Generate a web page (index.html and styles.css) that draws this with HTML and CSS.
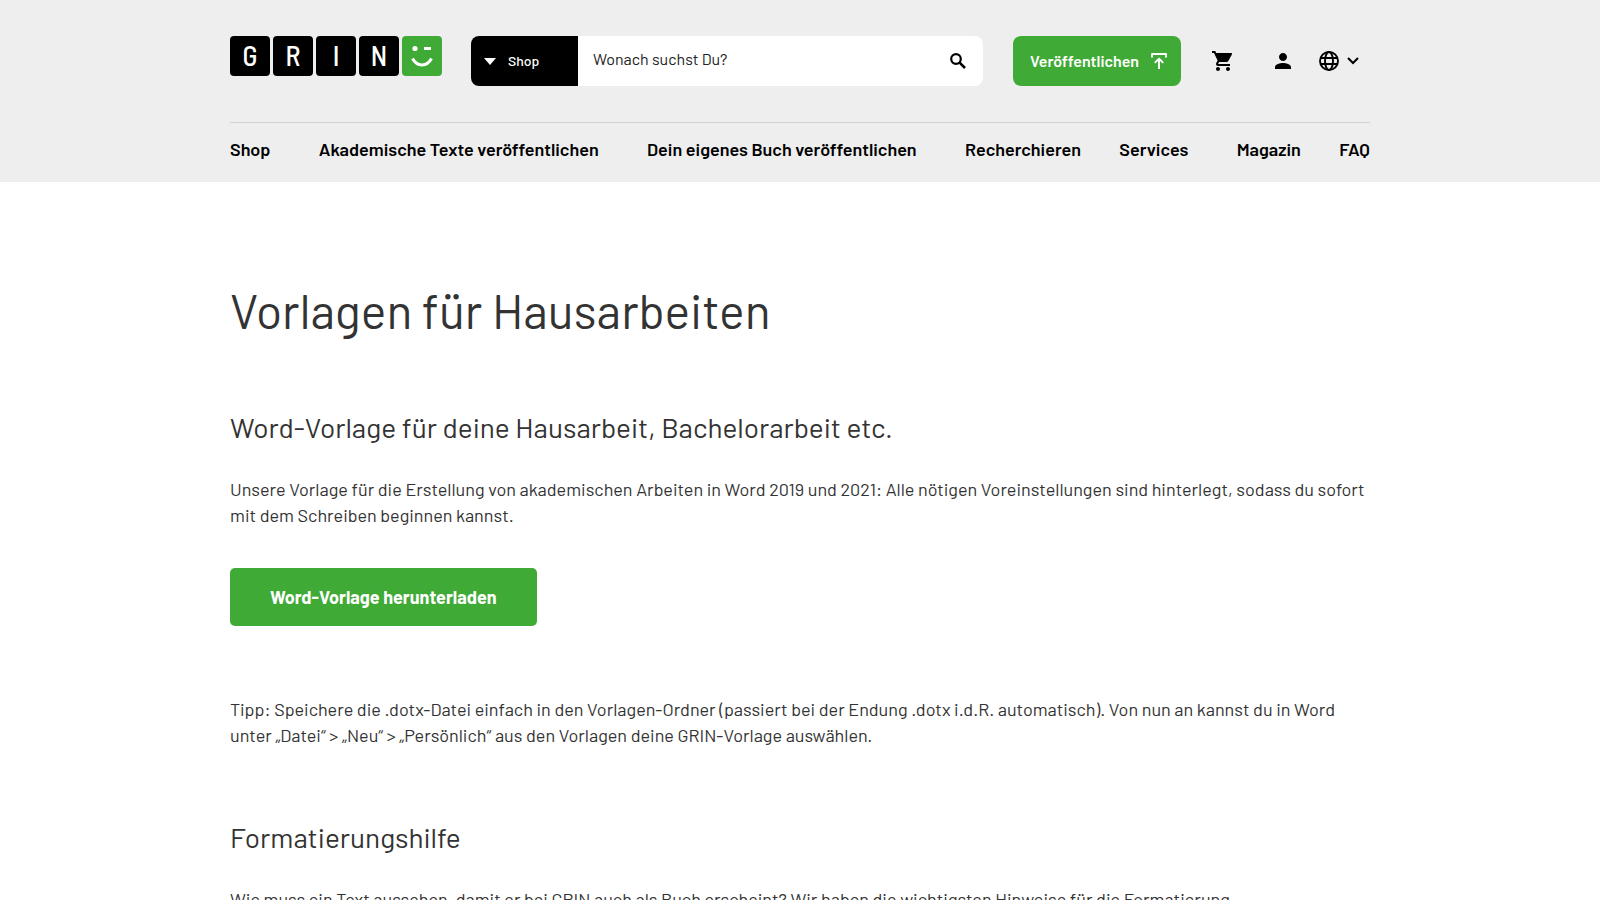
FILE: index.html
```html
<!DOCTYPE html>
<html lang="de">
<head>
    <meta charset="UTF-8">
    <meta name="viewport" content="width=device-width, initial-scale=1.0">
    <title>Vorlagen für Hausarbeiten</title>
    <link rel="stylesheet" href="styles.css">
</head>
<body>

    <header class="header">
        <div class="container">
            <div class="topbar">
                <a href="#" class="logo" aria-label="GRIN">
                    <span class="tile">G</span>
                    <span class="tile">R</span>
                    <span class="tile">I</span>
                    <span class="tile">N</span>
                    <span class="tile smiley">
                        <svg width="40" height="40" viewBox="0 0 40 40" fill="none" stroke="#fff">
                            <circle cx="13" cy="12.5" r="2.6" fill="#fff" stroke="none"/>
                            <path d="M22 12.500h7" stroke-width="3"/>
                            <path d="M10.500 22.500C15 31 25 31 29.500 22.500" stroke-width="3"/>
                        </svg>
                    </span>
                </a>

                <form class="search">
                    <div class="category">
                        <svg class="caret" width="12" height="7" viewBox="0 0 12 7"><path d="M0 0h12L6 7z" fill="#fff"/></svg>
                        <select aria-label="Bereich">
                            <option>Shop</option>
                        </select>
                    </div>
                    <input type="text" placeholder="Wonach suchst Du?" aria-label="Suche">
                    <button type="submit" class="search-button" aria-label="Suchen">
                        <svg width="16" height="16" viewBox="0 0 16 16" fill="none" stroke="#000" stroke-width="2.2">
                            <circle cx="6" cy="6" r="4.800"/>
                            <path d="M9.600 9.600L15 15" stroke-width="2.6"/>
                        </svg>
                    </button>
                </form>

                <a href="#" class="publish">
                    Veröffentlichen
                    <svg width="16" height="16" viewBox="0 0 16 16" fill="none" stroke="#fff" stroke-width="1.9" stroke-linejoin="round">
                        <path d="M1 4.500V1h14v3.500M8 16V6M3.800 9.800L8 5.600l4.200 4.200"/>
                    </svg>
                </a>

                <div class="icons">
                    <a href="#" aria-label="Warenkorb">
                        <svg width="24" height="24" viewBox="0 0 24 24"><path d="M7 18c-1.100 0-1.990.9-1.990 2S5.900 22 7 22s2-.9 2-2-.9-2-2-2zM1 2v2h2l3.600 7.590-1.350 2.450c-.16.28-.25.61-.25.96 0 1.100.9 2 2 2h12v-2H7.420c-.14 0-.25-.11-.25-.25l.03-.12.9-1.630h7.450c.75 0 1.410-.41 1.750-1.030l3.580-6.490A1 1 0 0 0 20 4H5.210l-.94-2H1zm16 16c-1.100 0-1.990.9-1.990 2s.89 2 1.990 2 2-.9 2-2-.9-2-2-2z"/></svg>
                    </a>
                    <a href="#" aria-label="Mein Konto">
                        <svg width="24" height="24" viewBox="0 0 24 24"><path d="M12 12c2.210 0 4-1.790 4-4s-1.790-4-4-4-4 1.790-4 4 1.790 4 4 4zm0 2c-2.670 0-8 1.340-8 4v2h16v-2c0-2.660-5.330-4-8-4z"/></svg>
                    </a>
                    <button type="button" class="language" aria-label="Sprache">
                        <svg width="20" height="20" viewBox="0 0 20 20" fill="none" stroke="#000" stroke-width="1.900">
                            <circle cx="10" cy="10" r="9"/>
                            <ellipse cx="10" cy="10" rx="4" ry="9"/>
                            <path d="M1.500 7h17M1.500 13h17"/>
                        </svg>
                        <svg width="12" height="8" viewBox="0 0 12 8" fill="none" stroke="#000" stroke-width="2">
                            <path d="M1 1l5 5 5-5"/>
                        </svg>
                    </button>
                </div>
            </div>

            <nav class="nav">
                <a href="#" class="has-submenu">Shop</a>
                <a href="#" class="has-submenu">Akademische Texte veröffentlichen</a>
                <a href="#" class="has-submenu">Dein eigenes Buch veröffentlichen</a>
                <a href="#">Recherchieren</a>
                <a href="#" class="has-submenu">Services</a>
                <a href="#">Magazin</a>
                <a href="#">FAQ</a>
            </nav>
        </div>
    </header>

    <main class="container content">
        <h1>Vorlagen für Hausarbeiten</h1>

        <h2>Word-Vorlage für deine Hausarbeit, Bachelorarbeit etc.</h2>
        <p>Unsere Vorlage für die Erstellung von akademischen Arbeiten in Word 2019 und 2021: Alle nötigen Voreinstellungen sind hinterlegt, sodass du sofort mit dem Schreiben beginnen kannst.</p>

        <a href="#" class="download">Word-Vorlage herunterladen</a>

        <p>Tipp: Speichere die .dotx-Datei einfach in den Vorlagen-Ordner (passiert bei der Endung .dotx i.d.R. automatisch). Von nun an kannst du in Word unter „Datei“ &gt; „Neu“ &gt; „Persönlich“ aus den Vorlagen deine GRIN-Vorlage auswählen.</p>

        <h2 class="next">Formatierungshilfe</h2>
        <p>Wie muss ein Text aussehen, damit er bei GRIN auch als Buch erscheint? Wir haben die wichtigsten Hinweise für die Formatierung</p>
    </main>

</body>
</html>
```
FILE: styles.css
```css
* {
    box-sizing: border-box;
}

body {
    margin: 0;
    font-family: Barlow, Roboto, sans-serif;
    font-size: 18px;
    line-height: 26px;
    color: #333;
    background-color: #fff;
}

a {
    color: #000;
    text-decoration: none;
}

svg {
    display: block;
    flex-shrink: 0;
}

.container {
    max-width: 1140px;
    margin: 0 auto;
}

.header {
    background-color: #eee;
}

.topbar {
    display: flex;
    align-items: center;
    padding: 36px 0;
    border-bottom: 1px solid #d2d2d2;
}

.logo {
    display: flex;
    align-self: flex-start;
    gap: 3px;
    margin-right: 29px;
}

.tile {
    width: 40px;
    height: 40px;
    border-radius: 4px;
    background-color: #000;
    color: #fff;
    font-family: "Barlow Semi Condensed", Barlow, Roboto, sans-serif;
    font-size: 28px;
    font-weight: 500;
    line-height: 38px;
    text-align: center;
}

.smiley {
    background-color: #3faa35;
}

.search {
    display: flex;
    flex: 1;
    height: 50px;
    margin-right: 30px;
    border-radius: 8px;
    overflow: hidden;
    background-color: #fff;
}

.category {
    display: flex;
    align-items: center;
    gap: 12px;
    width: 107px;
    padding-left: 13px;
    background-color: #000;
}

.category select {
    flex: 1;
    height: 50px;
    padding: 0 0 2px;
    appearance: none;
    border: none;
    background: none;
    color: #fff;
    font: 500 14px Barlow, Roboto, sans-serif;
}

.search input {
    flex: 1;
    min-width: 0;
    padding: 0 15px 6px;
    border: none;
    background: none;
    font: 16px Barlow, Roboto, sans-serif;
    outline: none;
}

.search input::placeholder {
    color: #222;
}

.search-button {
    padding: 0 17px;
    border: none;
    background: none;
    cursor: pointer;
}

.publish {
    display: flex;
    align-items: center;
    gap: 12px;
    height: 50px;
    padding: 0 14px 0 17px;
    border-radius: 8px;
    background-color: #3faa35;
    color: #fff;
    font-size: 16px;
    font-weight: 600;
    line-height: 24px;
}

.icons {
    display: flex;
    align-items: center;
    gap: 36px;
    padding: 0 11px 0 30px;
}

.language {
    display: flex;
    align-items: center;
    gap: 8px;
    margin-left: -12px;
    padding: 0;
    border: none;
    background: none;
    cursor: pointer;
}

.nav {
    display: flex;
    justify-content: space-between;
    padding: 13px 0 20px;
}

.nav a {
    font-size: 18px;
    font-weight: 600;
}

.nav .has-submenu {
    padding-right: 10px;
}

.content {
    padding: 98px 0 40px;
}

h1 {
    margin: 0 0 69px;
    font-size: 48px;
    font-weight: 400;
    line-height: 60px;
}

h2 {
    margin: 0 0 31px;
    font-size: 28px;
    font-weight: 400;
    line-height: 36px;
}

p {
    margin: 0;
}

.download {
    display: inline-block;
    margin: 40px 0 70px;
    padding: 16px 40px;
    border-radius: 5px;
    background-color: #3faa35;
    color: #fff;
    font-weight: 700;
    vertical-align: top;
}

.next {
    margin-top: 71px;
}
```
